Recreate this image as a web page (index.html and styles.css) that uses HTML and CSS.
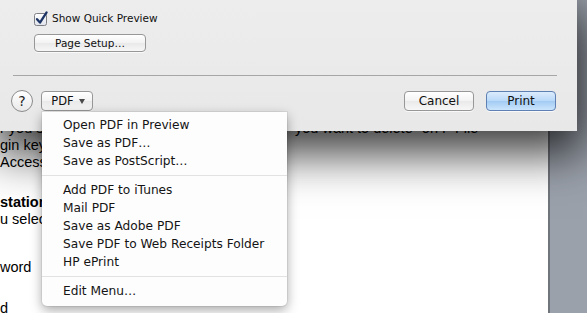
FILE: index.html
```html
<!DOCTYPE html>
<html lang="en">
<head>
  <meta charset="UTF-8" />
  <title>Print</title>
  <link rel="stylesheet" href="styles.css">
</head>
<body>

  <!-- document window behind the sheet -->
  <div class="backdrop">
    <div class="doc">
      <div class="para">
        <div class="line split"><span>r you se</span><span>you want to delete" on F File</span></div>
        <div class="line">gin keyc</div>
        <div class="line">Access</div>
      </div>
      <div class="para gap-head">
        <div class="line bold">station</div>
        <div class="line">u selec</div>
      </div>
      <div class="para gap-word">
        <div class="line">word</div>
      </div>
      <div class="para gap-last">
        <div class="line">d</div>
      </div>
    </div>
    <div class="desk"></div>
  </div>

  <!-- print sheet -->
  <div class="sheet">
    <div class="options">
      <label class="check-row">
        <svg class="checkbox" width="15" height="16" viewBox="0 0 15 16">
          <defs>
            <linearGradient id="boxfill" x1="0" y1="0" x2="0" y2="1">
              <stop offset="0" stop-color="#ffffff"/>
              <stop offset="1" stop-color="#dfe3ea"/>
            </linearGradient>
          </defs>
          <rect x="0.5" y="3.5" width="12" height="12" rx="2" fill="url(#boxfill)" stroke="#7d7f84"/>
          <path d="M3 9.2 L6 12.6 L12.6 2.4" fill="none" stroke="#1d3566" stroke-width="2.3" stroke-linecap="round" stroke-linejoin="round"/>
        </svg>
        <span>Show Quick Preview</span>
      </label>
      <button class="btn btn-small">Page Setup…</button>
    </div>

    <div class="rule"></div>

    <div class="actions">
      <button class="help">?</button>
      <button class="btn btn-pdf">PDF <span class="caret"></span></button>
      <button class="btn btn-cancel">Cancel</button>
      <button class="btn btn-print">Print</button>
    </div>
  </div>

  <!-- PDF popup menu -->
  <ul class="menu">
    <li>Open PDF in Preview</li>
    <li>Save as PDF…</li>
    <li>Save as PostScript…</li>
    <li class="sep"></li>
    <li>Add PDF to iTunes</li>
    <li>Mail PDF</li>
    <li>Save as Adobe PDF</li>
    <li>Save PDF to Web Receipts Folder</li>
    <li>HP ePrint</li>
    <li class="sep"></li>
    <li>Edit Menu…</li>
  </ul>

</body>
</html>
```

FILE: styles.css
```css
body {
  margin: 0;
  width: 587px;
  height: 313px;
  overflow: hidden;
  position: relative;
  font-family: 'DejaVu Sans', sans-serif;
  color: #111;
}

.backdrop {
  display: flex;
  height: 313px;
}

.doc {
  width: 548px;
  background: #fff;
  padding-top: 120px;
  font-family: 'Liberation Sans', Arial, sans-serif;
  font-size: 14.5px;
  color: #000;
  overflow: hidden;
}

.line {
  line-height: 17px;
  white-space: nowrap;
}

.split {
  display: grid;
  grid-template-columns: 295px auto;
}

.bold {
  font-weight: bold;
}

.gap-head {
  margin-top: 23px;
}

.gap-word {
  margin-top: 31px;
}

.gap-last {
  margin-top: 24px;
}

.desk {
  flex: 1;
  background: #9ba1ab;
  border-left: 2px solid #71757c;
}

/* sheet */
.sheet {
  position: absolute;
  left: 0;
  top: 0;
  width: 577px;
  height: 131px;
  background: linear-gradient(#ededed, #e8e8e8);
  box-shadow: 0 16px 44px 6px rgba(0, 0, 0, 0.78);
}

.options {
  padding: 9px 0 0 34px;
}

.check-row {
  display: flex;
  align-items: center;
  gap: 3px;
  height: 17px;
  font-size: 10.5px;
}

.btn {
  font-family: 'DejaVu Sans', sans-serif;
  color: #111;
  border: 1px solid #979797;
  border-radius: 4px;
  background: linear-gradient(#ffffff, #f3f3f3 50%, #e9e9e9 51%, #f7f7f7);
  box-shadow: 0 1px 0 rgba(255, 255, 255, 0.7);
  padding: 0;
}

.btn-small {
  display: block;
  margin-top: 8px;
  width: 112px;
  height: 18px;
  font-size: 10.5px;
}

.rule {
  margin: 23px 20px 0 13px;
  border-top: 1px solid #a6a6a6;
}

.actions {
  display: flex;
  align-items: center;
  margin-top: 14px;
  padding: 0 21px 0 11px;
  height: 22px;
}

.help {
  width: 22px;
  height: 22px;
  border-radius: 50%;
  border: 1px solid #8b8b8b;
  background: linear-gradient(#ffffff, #e9e9e9);
  font-family: 'DejaVu Sans', sans-serif;
  font-size: 14px;
  color: #222;
  padding: 0;
  line-height: 20px;
}

.btn-pdf {
  margin-left: 8px;
  width: 52px;
  height: 20px;
  font-size: 11.5px;
  display: flex;
  align-items: center;
  justify-content: center;
  gap: 5px;
  padding-left: 2px;
}

.caret {
  width: 0;
  height: 0;
  border-left: 3.5px solid transparent;
  border-right: 3.5px solid transparent;
  border-top: 5px solid #4a4a4a;
}

.btn-cancel,
.btn-print {
  width: 70px;
  height: 20px;
  font-size: 12px;
}

.btn-cancel {
  margin-left: auto;
}

.btn-print {
  margin-left: 12px;
  border-color: #5f80b3;
  background: linear-gradient(#dbecfd, #b8d8f8 50%, #a2cbf3 51%, #cbe5fc);
}

/* menu */
.menu {
  position: absolute;
  left: 42px;
  top: 112px;
  width: 245px;
  margin: 0;
  padding: 4px 0 6px;
  list-style: none;
  background: #fdfdfd;
  border-radius: 0 0 5px 5px;
  box-shadow: 0 4px 12px rgba(0, 0, 0, 0.35), 0 0 0 1px rgba(0, 0, 0, 0.06);
  font-size: 12.2px;
  color: #141414;
}

.menu li {
  height: 18px;
  line-height: 18px;
  padding-left: 21px;
}

.menu li.sep {
  height: 11px;
  line-height: 0;
  position: relative;
}

.menu li.sep::after {
  content: "";
  position: absolute;
  left: 0;
  right: 0;
  top: 5px;
  border-top: 1px solid #e2e2e2;
}
```
